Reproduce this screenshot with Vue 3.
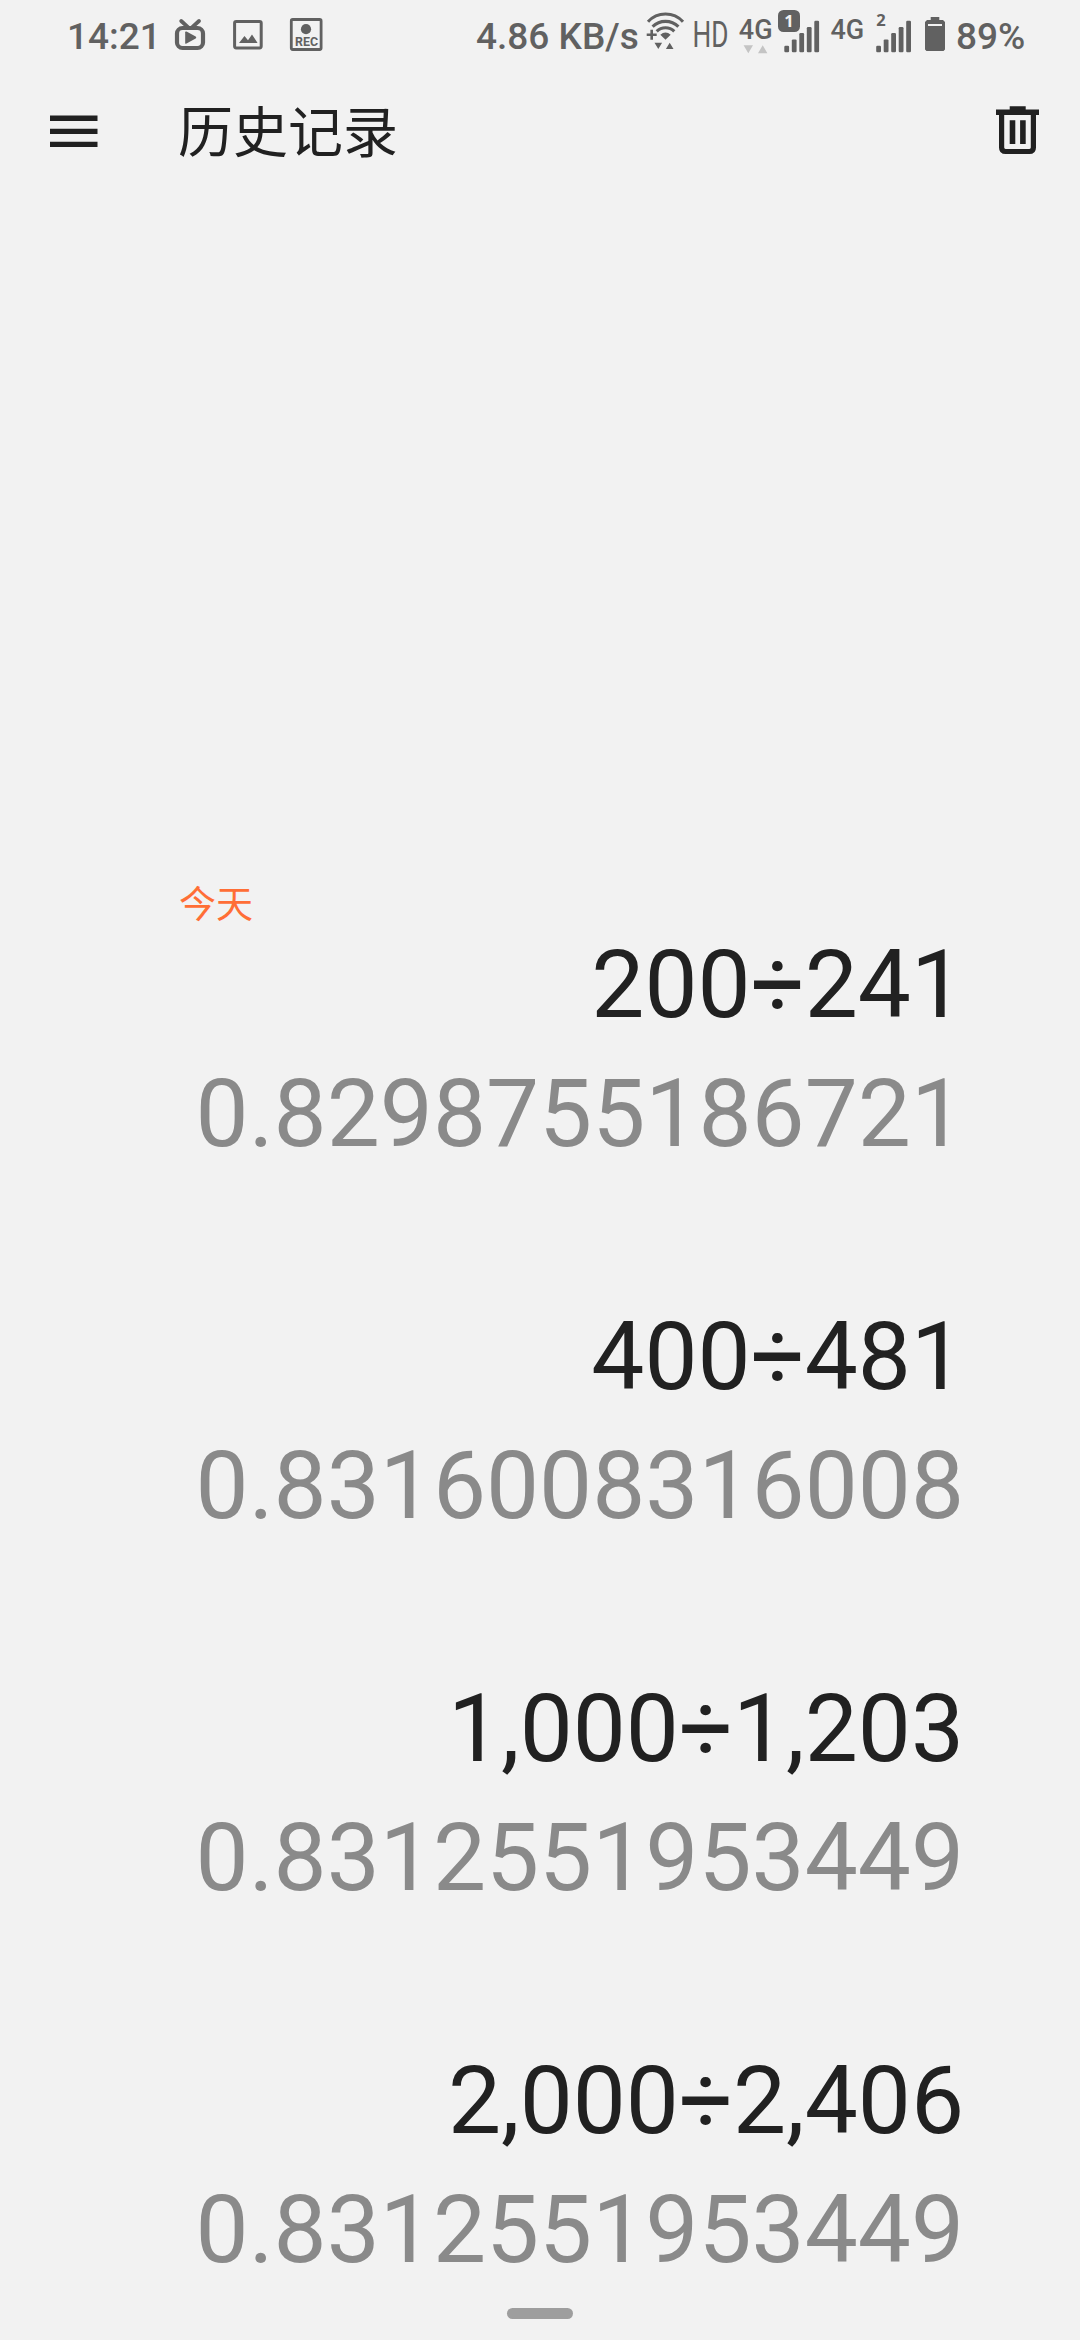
<script setup>
const bars = [
  { x: 0, top: 45.7 },
  { x: 7.5, top: 39.4 },
  { x: 15, top: 33 },
  { x: 22.5, top: 27 },
  { x: 30, top: 20.7 },
]

const history = [
  { expression: '200÷241', result: '0.8298755186721' },
  { expression: '400÷481', result: '0.8316008316008' },
  { expression: '1,000÷1,203', result: '0.8312551953449' },
  { expression: '2,000÷2,406', result: '0.8312551953449' },
]
</script>

<template>
  <div class="screen">
    <div class="status">
      <span class="clock">14:21</span>
      <svg class="notices" viewBox="170 0 160 70" width="160" height="70">
        <g fill="none" stroke="currentColor">
          <rect x="177" y="28" width="26" height="20" rx="5.5" stroke-width="4.2" />
          <path d="M181.2 21l7 6.4M199 21l-7 6.4" stroke-width="3.8" stroke-linecap="round" />
          <rect x="234.6" y="21.5" width="26.6" height="26.4" rx="1.6" stroke-width="3" />
          <rect x="291.3" y="19.5" width="29.8" height="30" rx="1.4" stroke-width="2.8" />
        </g>
        <path d="M185.2 32.3q0-1.200 1.300-.7l9.200 5q1.200.9 0 1.800l-9.200 5.200q-1.300.5-1.300-.7z" />
        <path d="M239 43l5.500-7 3.500 4.300 4-5.800 5.600 8.500z" />
        <circle cx="306" cy="29.200" r="5.100" />
        <text class="rec" x="295" y="45.800" textLength="23" lengthAdjust="spacingAndGlyphs">REC</text>
      </svg>
      <span class="speed">4.86 KB/s</span>
      <svg class="radio" viewBox="640 0 310 70" width="310" height="70">
        <g fill="none" stroke="currentColor" stroke-width="3.100">
          <path d="M648 21.700a23.700 23.700 0 0 1 35 0" />
          <path d="M652.600 26.600a18.500 18.500 0 0 1 25.800 0" />
          <path d="M656.700 31.300a12.600 12.600 0 0 1 17.600 0" />
          <path d="M646.700 34.800h10M651.700 29.800v10" stroke-width="2.600" />
        </g>
        <path d="M660.300 34.700q5.200-4.600 10.400 0l-5.200 5z" />
        <path d="M654.500 42.800h7.600l-3.800 6.200zM665.900 49h7.600l-3.800-6.200z" />
        <text class="hd" x="692.500" y="46.800" textLength="36" lengthAdjust="spacingAndGlyphs">HD</text>
        <text class="net" x="738.800" y="38.500">4G</text>
        <path class="faint" d="M743.600 45.300h9.400l-4.700 8zM758 53.200h9.400l-4.700-8z" />
        <rect x="778" y="10" width="22" height="22" rx="5.500" />
        <text class="sim light" x="789" y="26.700">1</text>
        <rect v-for="b in bars" :key="'a' + b.x" :x="784.300 + b.x" :y="b.top" width="4.800" :height="52.200 - b.top" rx="1.200" />
        <text class="net" x="830.500" y="38.500">4G</text>
        <text class="sim" x="881" y="26.200">2</text>
        <rect v-for="b in bars" :key="'b' + b.x" :x="876.200 + b.x" :y="b.top" width="4.800" :height="52.200 - b.top" rx="1.200" />
        <path fill-rule="evenodd" d="M930.700 17h8.600v3h3.700l2 2v27.500l-1.500 1.500h-17l-1.500-1.500v-27.500l2-2h3.700zM928 24v2h14v-2z" />
      </svg>
      <span class="charge">89%</span>
    </div>

    <header class="bar">
      <svg class="menu" viewBox="0 0 48 32" width="48" height="32">
        <path d="M0 .6h47.500v5.300h-47.500zM0 13.800h47.500v5.300h-47.500zM0 26.800h47.500v5.200h-47.500z" />
      </svg>
      <h1>历史记录</h1>
      <svg class="trash" viewBox="996 106 43 49" width="43" height="49">
        <path d="M1009.700 106.200h16v3.200h13.300v5.600h-43v-5.600h13.700z" />
        <path d="M1001.600 113v34.500q0 4 4 4h23.800q4 0 4-4v-34.500" fill="none" stroke="currentColor" stroke-width="5.200" />
        <path d="M1009.700 120.300h5.600v23.700h-5.600zM1020.100 120.300h5.600v23.700h-5.600z" />
      </svg>
    </header>

    <main>
      <h2>今天</h2>
      <section v-for="item in history" :key="item.expression" class="entry">
        <p class="expression">{{ item.expression }}</p>
        <p class="result">{{ item.result }}</p>
      </section>
    </main>
    <div class="home"></div>
  </div>
</template>

<style>
body {
  background: #f2f2f2;
}
</style>

<style scoped>
.screen {
  width: 1080px;
  height: 2340px;
  box-sizing: border-box;
  overflow: hidden;
  display: flex;
  flex-direction: column;
  background: #f2f2f2;
  color: #212121;
  font-family: Roboto, "Noto Sans CJK SC", sans-serif;
}
svg {
  display: block;
  flex: none;
  fill: currentColor;
}
.status {
  height: 70px;
  flex: none;
  display: flex;
  color: #616161;
  font-size: 37px;
  font-weight: 500;
  line-height: 74px;
  white-space: nowrap;
}
.clock {
  width: 103px;
  margin-left: 67px;
}
.speed {
  width: 164px;
  margin-left: 146px;
}
.charge {
  margin-left: 6px;
}
.rec {
  font: 700 12.500px Roboto, sans-serif;
}
.hd {
  font: 400 37px Roboto, sans-serif;
}
.net {
  font: 500 27px Roboto, sans-serif;
}
.sim {
  font: 700 16.500px "Noto Sans", sans-serif;
  text-anchor: middle;
}
.light {
  fill: #f2f2f2;
}
.faint {
  fill: #c4c4c4;
}
.bar {
  height: 122px;
  flex: none;
  display: flex;
  align-items: flex-start;
  padding: 0 41px 0 50px;
}
.menu {
  margin-top: 45px;
}
.bar h1 {
  flex: 1;
  margin: 23px 0 0 80px;
  font-size: 55px;
  font-weight: 400;
  line-height: 80px;
}
.trash {
  margin-top: 36px;
}
main {
  flex: none;
  width: 785px;
  padding: 686px 0 0 179px;
}
h2 {
  margin: 0;
  height: 54px;
  font-size: 37px;
  font-weight: 400;
  line-height: 56px;
  color: #ff6e36;
}
.entry {
  height: 372px;
  text-align: right;
  font-size: 94.500px;
}
.entry:last-child {
  height: 260px;
}
.entry p {
  margin: 0;
  height: 129px;
  line-height: 105px;
}
.result {
  color: #8a8a8a;
}
.home {
  width: 66px;
  height: 11px;
  flex: none;
  margin: 0 auto;
  border-radius: 6px;
  background: #9e9e9e;
}
</style>
